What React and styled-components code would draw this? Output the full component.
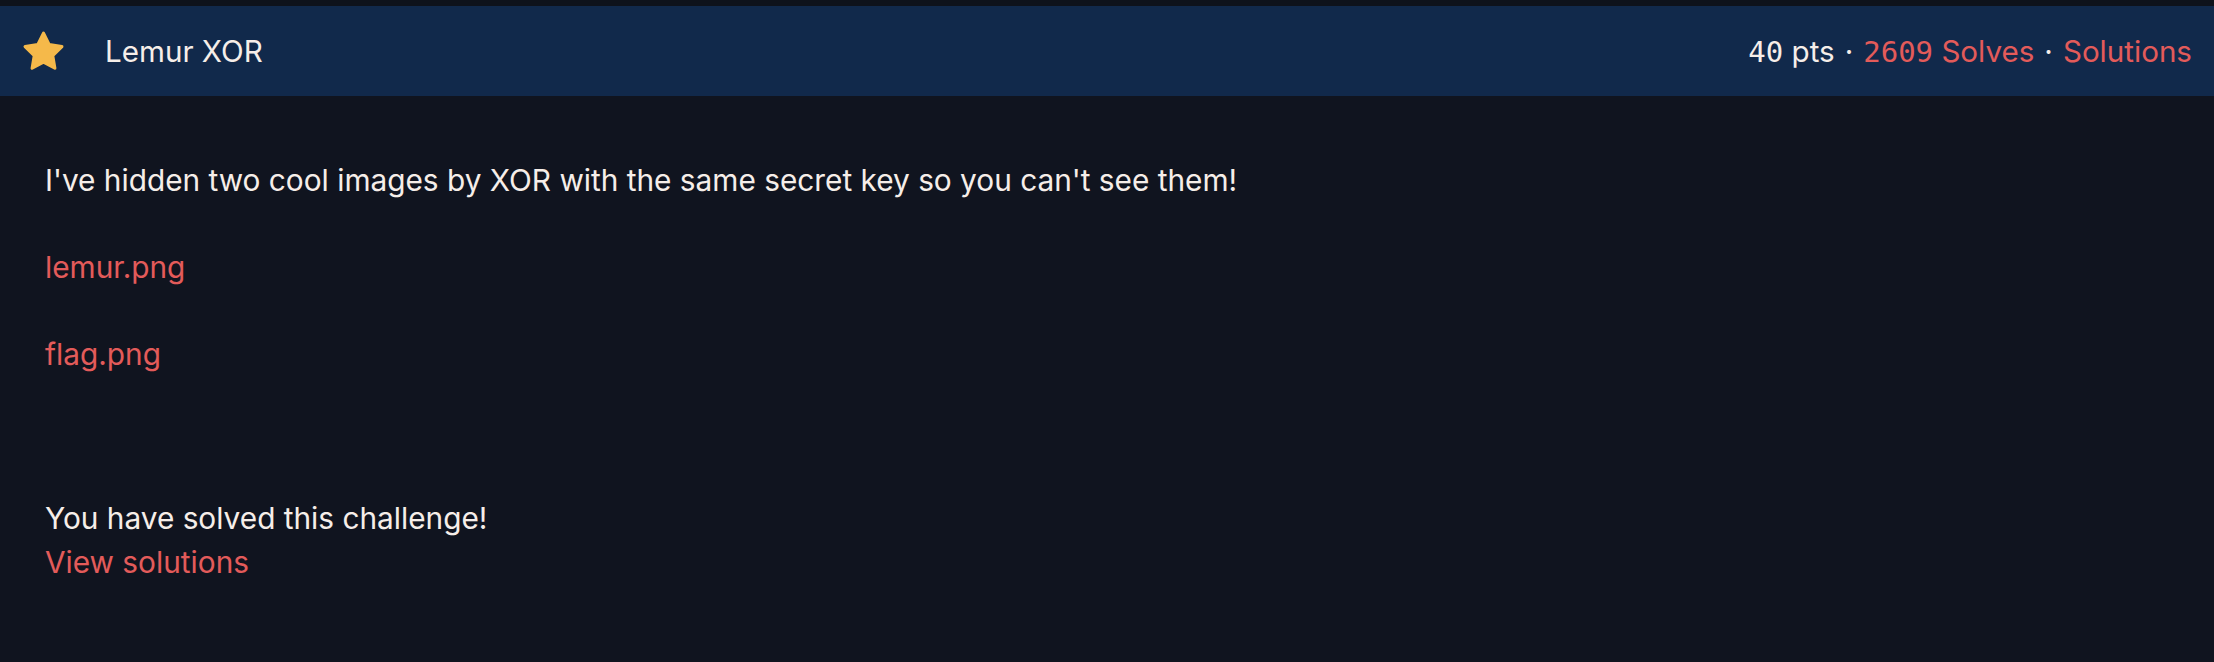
import React from "react";
import styled, { createGlobalStyle } from "styled-components";

const GlobalStyle = createGlobalStyle`
  html, body {
    margin: 0;
    padding: 0;
    background: #10141f;
  }
  body {
    font-family: Inter, "Noto Sans", sans-serif;
    color: #f6eee9;
  }
`;

const Page = styled.div`
  padding-top: 6px;
  background: #0e121b;
  min-height: 662px;
  display: flex;
  flex-direction: column;
`;

const Header = styled.header`
  height: 90px;
  background: #11294b;
  display: flex;
  align-items: center;
  padding: 0 22px 0 20px;
`;

const StarIcon = styled.svg`
  width: 47px;
  height: 47px;
  flex: none;
`;

const Title = styled.h1`
  margin: 0 0 0 38px;
  font-size: 29.6px;
  font-weight: 400;
  flex: 1;
`;

const Meta = styled.div`
  font-size: 29.6px;
  display: flex;
  align-items: baseline;
  gap: 10px;
`;

const Mono = styled.span`
  font-family: "DejaVu Sans Mono", monospace;
  font-size: 29px;
`;

const Dot = styled.span`
  color: #f6eee9;
`;

const Red = styled.a`
  color: #e35b5a;
  text-decoration: none;
`;

const Body = styled.main`
  flex: 1;
  background: #10141f;
  padding: 62px 45px 34px;
  font-size: 29.8px;
  line-height: 44px;
`;

const Para = styled.p`
  margin: 0 0 43px;
`;

const Solved = styled.div`
  margin-top: 120px;
`;

const Link = styled.a`
  color: #e35b5a;
  text-decoration: none;
  display: block;
`;

const Star = () => (
  <StarIcon viewBox="0 0 24 24">
    <path
      d="M12 2.6l2.9 5.9 6.5.95-4.7 4.6 1.1 6.45L12 17.45 6.2 20.5l1.1-6.45-4.7-4.6 6.5-.95z"
      fill="#f5b94a"
      stroke="#f5b94a"
      strokeWidth="1.6"
      strokeLinejoin="round"
    />
  </StarIcon>
);

export default function App() {
  return (
    <>
      <GlobalStyle />
      <Page>
        <Header>
          <Star />
          <Title>Lemur XOR</Title>
          <Meta>
            <span>
              <Mono>40</Mono> pts
            </span>
            <Dot>·</Dot>
            <Red href="#">
              <Mono>2609</Mono> Solves
            </Red>
            <Dot>·</Dot>
            <Red href="#">Solutions</Red>
          </Meta>
        </Header>
        <Body>
          <Para>I've hidden two cool images by XOR with the same secret key so you can't see them!</Para>
          <Para>
            <Link href="#">lemur.png</Link>
          </Para>
          <Para>
            <Link href="#">flag.png</Link>
          </Para>
          <Solved>
            You have solved this challenge!
            <Link href="#">View solutions</Link>
          </Solved>
        </Body>
      </Page>
    </>
  );
}
